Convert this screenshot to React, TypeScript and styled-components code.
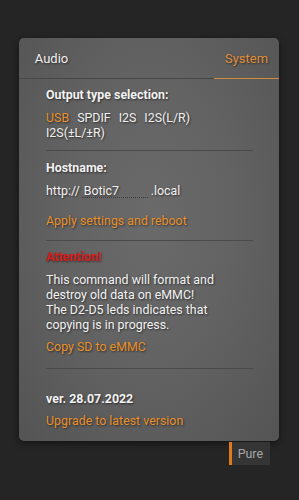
import React from 'react';
import styled, { createGlobalStyle } from 'styled-components';

const GlobalStyle = createGlobalStyle`
  html, body {
    margin: 0;
    padding: 0;
    background: #252525;
    font-family: Roboto, "Noto Sans", "Liberation Sans", sans-serif;
  }
`;

const Page = styled.div`
  width: 299px;
  height: 500px;
  padding: 38px 20px 0 19px;
  box-sizing: border-box;
  display: flex;
  flex-direction: column;
`;

const Dialog = styled.div`
  width: 260px;
  border-radius: 5px;
  background: radial-gradient(ellipse at 50% 45%, #6a6a6a 0%, #636363 45%, #545454 100%);
  box-shadow: 0 2px 6px rgba(0, 0, 0, 0.5);
  color: #f2f2f2;
  text-shadow: 1px 1px 2px rgba(0, 0, 0, 0.55);
`;

const TabBar = styled.div`
  height: 41px;
  display: flex;
  justify-content: space-between;
  border-bottom: 1px solid #474747;
  box-sizing: border-box;
`;

const Tab = styled.div<{ $active?: boolean }>`
  width: 65px;
  display: flex;
  align-items: center;
  justify-content: center;
  font-size: 13px;
  margin-bottom: -1px;
  color: ${({ $active }) => ($active ? '#e0903a' : '#f0f0f0')};
  border-bottom: 1px solid ${({ $active }) => ($active ? '#d08a40' : 'transparent')};
`;

const Body = styled.div`
  padding: 0 26px 0 27px;
`;

const Section = styled.div<{ $top?: number; $bottom?: number; $first?: boolean }>`
  padding-top: ${({ $top }) => $top ?? 9}px;
  padding-bottom: ${({ $bottom }) => $bottom ?? 12}px;
  border-top: ${({ $first }) => ($first ? 'none' : '1px solid #4a4a4a')};
  font-size: 12.4px;
  line-height: 15px;
`;

const Title = styled.div`
  font-weight: bold;
  margin-bottom: 8px;
`;

const Warning = styled.div`
  font-weight: bold;
  color: #d81c1c;
  margin-bottom: 8px;
`;

const Options = styled.div`
  display: flex;
  flex-wrap: wrap;
  column-gap: 8px;
`;

const Option = styled.span<{ $selected?: boolean }>`
  color: ${({ $selected }) => ($selected ? '#e8902c' : '#f0f0f0')};
`;

const HostRow = styled.div`
  display: flex;
  align-items: flex-end;
  height: 15px;
`;

const HostInput = styled.input`
  width: 66px;
  height: 15px;
  margin: 0 3px 0 2px;
  padding: 0 0 0 2px;
  box-sizing: border-box;
  border: none;
  border-bottom: 1px dotted #3c3c3c;
  background: transparent;
  color: #f2f2f2;
  font: inherit;
  font-size: 12.4px;
  line-height: 14px;
  text-shadow: inherit;
  outline: none;
`;

const Action = styled.div<{ $gap?: number }>`
  margin-top: ${({ $gap }) => $gap ?? 7}px;
  color: #e8902c;
  cursor: pointer;
`;

const Footer = styled.div`
  display: flex;
  justify-content: flex-end;
  padding-right: 9px;
  margin-top: 1px;
`;

const ModeButton = styled.div`
  height: 23px;
  padding: 0 7px 0 6px;
  display: flex;
  align-items: center;
  background: #353535;
  border-left: 3px solid #e07a1c;
  color: #a6a6a6;
  font-size: 12.4px;
`;

export default function App() {
  return (
    <>
      <GlobalStyle />
      <Page>
        <Dialog>
          <TabBar>
            <Tab>Audio</Tab>
            <Tab $active>System</Tab>
          </TabBar>
          <Body>
            <Section $first $top={8} $bottom={10}>
              <Title>Output type selection:</Title>
              <Options>
                <Option $selected>USB</Option>
                <Option>SPDIF</Option>
                <Option>I2S</Option>
                <Option>I2S(L/R)</Option>
                <Option>I2S(±L/±R)</Option>
              </Options>
            </Section>
            <Section $top={9} $bottom={12}>
              <Title>Hostname:</Title>
              <HostRow>
                <span>http://</span>
                <HostInput defaultValue="Botic7" />
                <span>.local</span>
              </HostRow>
              <Action $gap={15}>Apply settings and reboot</Action>
            </Section>
            <Section $top={8} $bottom={14}>
              <Warning>Attention!</Warning>
              <div>
                This command will format and
                <br />
                destroy old data on eMMC!
                <br />
                The D2-D5 leds indicates that
                <br />
                copying is in progress.
              </div>
              <Action>Copy SD to eMMC</Action>
            </Section>
            <Section $top={22} $bottom={13}>
              <Title style={{ marginBottom: 7 }}>ver. 28.07.2022</Title>
              <Action $gap={0}>Upgrade to latest version</Action>
            </Section>
          </Body>
        </Dialog>
        <Footer>
          <ModeButton>Pure</ModeButton>
        </Footer>
      </Page>
    </>
  );
}
